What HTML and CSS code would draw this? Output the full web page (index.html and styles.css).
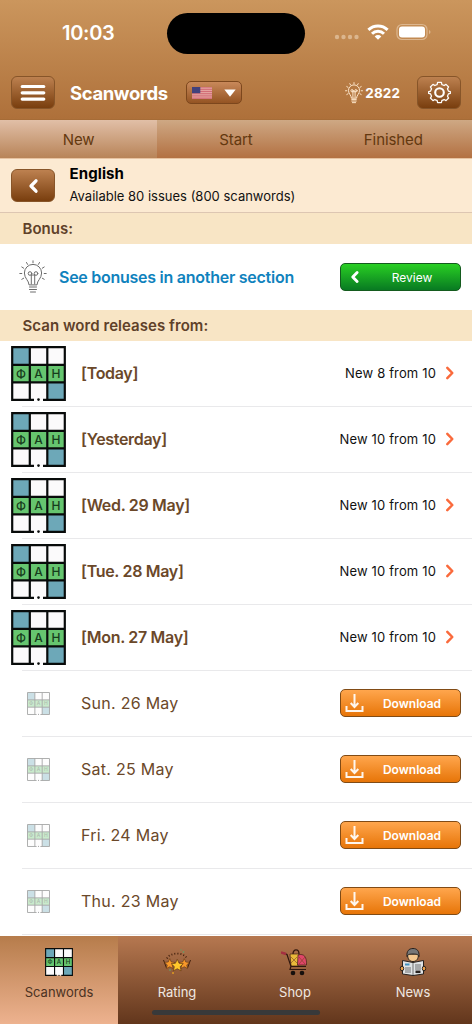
FILE: index.html
```html
<!DOCTYPE html>
<html lang="en">
<head>
<meta charset="utf-8">
<title>Scanwords</title>
<link rel="stylesheet" href="styles.css">
</head>
<body>
<svg class="defs" width="0" height="0">
  <symbol id="grid" viewBox="0 0 55 55">
    <rect x="1" y="1" width="53" height="53" fill="#fbfafb"/>
    <path d="M1 1h18v18H1zM36 36h18v18H36z" fill="#6da8b8"/>
    <path d="M1 19h53v17H1z" fill="#66c56f"/>
    <path d="M23 53.800H1.200V1.200h52.600v52.600H32M18.800 1v53M36.300 1v53M1 18.800h53M1 36.300h53" fill="none" stroke="#080b0a" stroke-width="2.200"/>
    <circle cx="27.500" cy="53.600" r="1.300" fill="#080b0a"/>
    <g class="grid-letters" text-anchor="middle"><text x="10" y="31.600">Ф</text><text x="27.500" y="31.600">А</text><text x="45" y="31.600">Н</text></g>
  </symbol>
  <symbol id="bulb" viewBox="0 0 28 34">
    <g fill="none" stroke="currentColor" stroke-linecap="round">
      <path d="M10 24.500c0-4-4.600-6-4.600-11.500a8.600 8.600 0 0 1 17.200 0c0 5.500-4.600 7.500-4.600 11.500zM10.500 27h7M10.500 29.500h7M11.500 32h5M12.300 24v-9M15.700 24v-9M12.300 15h3.400"/>
      <circle cx="11" cy="13.500" r="1.800"/><circle cx="17" cy="13.500" r="1.800"/>
      <path d="M14 .8v2M7.500 2.500l1.100 1.900M20.500 2.500l-1.100 1.900M2.800 7l1.900 1.200M25.200 7l-1.900 1.200M.8 13.500h2M25.200 13.500h2M2.800 19.300l1.900-1.100M25.200 19.300l-1.900-1.100"/>
    </g>
  </symbol>
  <symbol id="back" viewBox="0 0 12 16"><path d="M9 2.800L4 8l5 5.200" fill="none" stroke="#fff" stroke-width="3.300" stroke-linecap="round" stroke-linejoin="round"/></symbol>
  <symbol id="next" viewBox="0 0 10 16"><path d="M2.300 2.800L7.300 8l-5 5.200" fill="none" stroke="#fa6a3c" stroke-width="2.500" stroke-linecap="round" stroke-linejoin="round"/></symbol>
  <symbol id="download" viewBox="0 0 19 20"><path d="M1.500 13v5h16v-5M9.500 1v12M5.700 10l3.800 4 3.800-4" fill="none" stroke="#fff" stroke-opacity=".92" stroke-width="2"/></symbol>
  <symbol id="star" viewBox="0 0 12 12"><path d="M6 .7l1.600 3.500 3.800.4-2.800 2.600.8 3.800L6 9.100 2.600 11l.8-3.800L.6 4.600l3.800-.4z" stroke="#5f3614" stroke-width=".6"/></symbol>
</svg>
<div class="screen">
  <header class="header">
    <div class="status">
      <span class="clock">10:03</span>
      <span class="island"></span>
      <span class="status-icons">
        <svg width="26" height="6" viewBox="0 0 26 6" class="dots"><g fill="#dbb68e"><circle cx="3" cy="3" r="2.200"/><circle cx="9.500" cy="3" r="2.200"/><circle cx="16" cy="3" r="2.200"/><circle cx="22.500" cy="3" r="2.200"/></g></svg>
        <svg width="22" height="16" viewBox="0 0 22 16"><g fill="none" stroke="#fff" stroke-width="3"><path d="M1.400 5.900a13.700 13.700 0 0 1 19.200 0"/><path d="M5 9.700a8.600 8.600 0 0 1 12 0"/></g><path d="M7.700 12.400a4.700 4.700 0 0 1 6.600 0L11 15.700z" fill="#fff"/></svg>
        <svg width="36" height="18" viewBox="0 0 36 18"><rect x="1" y="1.500" width="30" height="15" rx="5" fill="none" stroke="#dcb68f" stroke-width="1.200"/><rect x="3" y="3.500" width="26" height="11" rx="3" fill="#fff"/><path d="M33 7c2 .7 2 3.300 0 4z" fill="#dcb68f"/></svg>
      </span>
    </div>
    <div class="toolbar">
      <button class="brown-btn"><svg width="26" height="18" viewBox="0 0 26 18"><path d="M2.200 2.500h21.600M2.200 8.800h21.600M2.200 15.100h21.600" stroke="#fff" stroke-width="3.200" stroke-linecap="round"/></svg></button>
      <h1 class="title">Scanwords</h1>
      <button class="lang">
        <svg width="20" height="12" viewBox="0 0 20 12"><rect width="20" height="12" fill="#e7a9a5"/><path d="M0 .8h20M0 2.600h20M0 4.500h20M0 6.400h20M0 8.200h20M0 10h20M0 11.600h20" stroke="#cf6670" stroke-width=".9"/><rect width="8.300" height="6.200" fill="#42417c"/></svg>
        <svg width="12" height="8" viewBox="0 0 12 8"><path d="M.3.500h11.400L6 7.800z" fill="#fff"/></svg>
      </button>
      <span class="hints"><svg class="hint-bulb" width="18" height="22"><use href="#bulb"/></svg><b>2822</b></span>
      <button class="brown-btn"><svg width="23" height="23" viewBox="0 0 24 24" fill="none" stroke="#fff"><path stroke-width="1.300" stroke-linejoin="round" d="M10 1.500h4l.5 2.200q1.300.3 2.300 1l2-1.200 2.700 2.700-1.200 2q.7 1 1 2.300l2 .5v2l-2 .5q-.3 1.300-1 2.300l1.200 2-2.700 2.700-2-1.200q-1 .7-2.300 1l-.5 2.200h-4l-.5-2.200q-1.300-.3-2.300-1l-2 1.200-2.700-2.700 1.200-2q-.7-1-1-2.300L.7 13v-2l2-.5q.3-1.300 1-2.300l-1.200-2 2.700-2.700 2 1.200q1-.7 2.300-1z"/><circle cx="12" cy="12" r="4.500" stroke-width="2.200"/></svg></button>
    </div>
  </header>
  <nav class="tabs"><a class="tab tab-on">New</a><a class="tab">Start</a><a class="tab">Finished</a></nav>
  <section class="info">
    <button class="brown-btn"><svg width="12" height="16"><use href="#back"/></svg></button>
    <div class="info-text"><h2>English</h2><p>Available 80 issues (800 scanwords)</p></div>
  </section>
  <h3 class="heading">Bonus:</h3>
  <section class="bonus">
    <svg class="bonus-bulb" width="28" height="34"><use href="#bulb"/></svg>
    <a class="bonus-link">See bonuses in another section</a>
    <button class="action review"><svg width="11" height="14" viewBox="0 0 12 16"><use href="#back"/></svg><span>Review</span></button>
  </section>
  <h3 class="heading">Scan word releases from:</h3>
  <main class="list">
    <div class="row"><svg class="thumb"><use href="#grid"/></svg><b class="date">[Today]</b><span class="count">New 8 from 10</span><svg class="next"><use href="#next"/></svg></div>
    <div class="row"><svg class="thumb"><use href="#grid"/></svg><b class="date">[Yesterday]</b><span class="count">New 10 from 10</span><svg class="next"><use href="#next"/></svg></div>
    <div class="row"><svg class="thumb"><use href="#grid"/></svg><b class="date">[Wed. 29 May]</b><span class="count">New 10 from 10</span><svg class="next"><use href="#next"/></svg></div>
    <div class="row"><svg class="thumb"><use href="#grid"/></svg><b class="date">[Tue. 28 May]</b><span class="count">New 10 from 10</span><svg class="next"><use href="#next"/></svg></div>
    <div class="row"><svg class="thumb"><use href="#grid"/></svg><b class="date">[Mon. 27 May]</b><span class="count">New 10 from 10</span><svg class="next"><use href="#next"/></svg></div>
    <div class="row"><svg class="thumb faded"><use href="#grid"/></svg><span class="date">Sun. 26 May</span><button class="action download"><svg width="19" height="20"><use href="#download"/></svg><span>Download</span></button></div>
    <div class="row"><svg class="thumb faded"><use href="#grid"/></svg><span class="date">Sat. 25 May</span><button class="action download"><svg width="19" height="20"><use href="#download"/></svg><span>Download</span></button></div>
    <div class="row"><svg class="thumb faded"><use href="#grid"/></svg><span class="date">Fri. 24 May</span><button class="action download"><svg width="19" height="20"><use href="#download"/></svg><span>Download</span></button></div>
    <div class="row"><svg class="thumb faded"><use href="#grid"/></svg><span class="date">Thu. 23 May</span><button class="action download"><svg width="19" height="20"><use href="#download"/></svg><span>Download</span></button></div>
  </main>
  <footer class="footer">
    <a class="foot foot-on"><svg width="28" height="28"><use href="#grid"/></svg><span>Scanwords</span></a>
    <a class="foot"><svg width="28" height="28" viewBox="0 0 28 28">
      <path d="M4 10.500c3-6.500 17-6.500 20 0" fill="none" stroke="#42200d" stroke-width="1.800" stroke-dasharray="1 2"/>
      <path d="M.5 12l3 8M27.500 12l-3 8" stroke="#42200d" stroke-width="1"/>
      <use href="#star" x="1" y="10" width="11.500" height="11.500" fill="#f7982a"/><use href="#star" x="15.500" y="10" width="11.500" height="11.500" fill="#f7982a"/><use href="#star" x="7.500" y="10.500" width="13.500" height="13.500" fill="#ffc82c"/>
      <g fill="#6f9665"><circle cx="18" cy="2" r=".8"/><circle cx="20.500" cy="4" r=".9"/><circle cx="7" cy="22" r=".9"/></g><circle cx="10" cy="25" r="1" fill="#df9b22"/></svg><span>Rating</span></a>
    <a class="foot"><svg width="28" height="28" viewBox="0 0 28 28">
      <path d="M12 6c0-5.500 6-5.500 6 0" fill="none" stroke="#32170d" stroke-width="1.300"/>
      <path d="M9 6h9l-1 12h-7z" fill="#e9b93a" stroke="#422014" stroke-width=".7"/><path d="M17 7c6-2 9 2 8.500 10H16.500z" fill="#df4668" stroke="#422014" stroke-width=".7"/>
      <path d="M10 9l6 6M16 9l-6 6M18 9l6 7M24 9l-6 7" stroke="#7b4224" stroke-width=".6"/>
      <path d="M1 4.500l5 2 4 12h15M10 18l-1 3.500h16" fill="none" stroke="#2f170f" stroke-width="1.200"/><path d="M0 4.500l5 1.500" stroke="#a52f41" stroke-width="2.500"/><circle cx="12" cy="25" r="2.300" fill="#16100d"/><circle cx="21" cy="25" r="2.300" fill="#16100d"/></svg><span>Shop</span></a>
    <a class="foot"><svg width="28" height="28" viewBox="0 0 28 28" stroke="#27211e" stroke-width="1">
      <path d="M8.500 6c0 5 2 7.500 5.500 7.500s5.500-2.500 5.500-7.500z" fill="#f4c88f"/><path d="M8 8.500C7.400 3 10 .5 14 .5s6.500 2.500 6 8c-1-2-2-2.500-6-2.500s-5 .5-6 2.500z" fill="#777878"/>
      <path d="M3.500 12.500L14 14.500l10.500-2V26L14 27.500 3.500 26z" fill="#dfe3e5"/><path d="M14 14.500v13M6 20h6M6 22h6M6 24h6M16 17h6M16 19h6M16 21h6" stroke-width=".6"/><path d="M6 16.500h4.500" stroke="#4290bd" stroke-width="2"/><path d="M16.500 23.800h5" stroke-width="2.500"/><ellipse cx="3" cy="20.500" rx="1.700" ry="2.300" fill="#efa34a"/><ellipse cx="25" cy="20.500" rx="1.700" ry="2.300" fill="#efa34a"/></svg><span>News</span></a>
    <span class="home"></span>
  </footer>
</div>
</body>
</html>
```
FILE: styles.css
```css
* { box-sizing: border-box; }
body { margin: 0; font-family: Inter, "Liberation Sans", sans-serif; background: #fff; color: #111; }
h1, h2, h3, p { margin: 0; }
button { margin: 0; padding: 0; font: inherit; color: #fff; }
svg { display: block; flex: none; }
.defs { display: none; }
.screen { width: 472px; height: 1024px; overflow: hidden; display: flex; flex-direction: column; }
.header { height: 120px; flex: none; background: linear-gradient(#cb965d, #ae703a); color: #fff; border-bottom: 1px solid #a66c37; }
.status { height: 66px; display: grid; grid-template-columns: 167px 138px 1fr; align-items: center; }
.clock { padding-left: 62px; font-size: 20px; font-weight: 600; letter-spacing: -.3px; }
.island { height: 41px; border-radius: 21px; background: #000; }
.status-icons { display: flex; align-items: center; padding-left: 29px; margin-top: -3px; }
.dots { margin: 10px 7px 0 0; }
.status-icons svg:last-child { margin-left: 7px; }
.toolbar { height: 53px; display: flex; align-items: center; padding: 0 11px; }
.brown-btn { width: 44px; height: 33px; flex: none; border: 1px solid #875529; border-radius: 6px; background: linear-gradient(#bd8150, #793e0e); display: flex; align-items: center; justify-content: center; }
.title { width: 117px; padding-left: 15px; font-size: 18.500px; font-weight: 700; letter-spacing: -.4px; }
.lang { width: 56px; height: 23px; margin-left: 14px; border: 1.500px solid #7c471d; border-radius: 5px; background: linear-gradient(#c9895a, #945423); display: flex; align-items: center; justify-content: space-between; padding: 0 5px; }
.hints { display: flex; align-items: center; gap: 2px; margin-left: auto; margin-right: 17px; font-size: 13.500px; letter-spacing: .1px; }
.hint-bulb { stroke-width: 1.500; color: #ffe9cf; }
.tabs { height: 39px; flex: none; display: grid; grid-template-columns: repeat(3, 1fr); border-bottom: 1px solid #e7c3a1; }
.tab { display: flex; align-items: center; justify-content: center; font-size: 15px; letter-spacing: -.1px; color: #63380f; background: linear-gradient(#cea884, #b37142); }
.tab-on { background: linear-gradient(#e1bfa7, #b88458); }
.info { height: 54px; flex: none; display: flex; align-items: center; padding-left: 11px; gap: 15px; background: #fcead2; border-bottom: 1px solid #ddc6b2; }
.info-text { padding-bottom: 1px; margin-left: -.5px; }
.info h2 { font-size: 15px; line-height: 22px; font-weight: 700; letter-spacing: .1px; color: #000; }
.info p { font-size: 13px; line-height: 23px; }
.heading { height: 31px; flex: none; padding-left: 22.500px; font-size: 15px; line-height: 31px; font-weight: 600; letter-spacing: .05px; color: #5f4129; background: #f8e5c5; }
.bonus { height: 66px; flex: none; display: flex; align-items: center; padding: 0 11px 0 19px; }
.bonus-bulb { color: #6c6c6c; }
.bonus-link { margin-left: 12px; font-size: 16px; font-weight: 600; letter-spacing: -.26px; color: #0f82bd; }
.action { width: 121px; height: 28px; margin-left: auto; border: 1.500px solid #814b15; border-radius: 5px; display: flex; align-items: center; }
.action span { flex: 1; text-align: center; }
.review { border-color: #145b1e; background: linear-gradient(#29cf23, #087a22); padding-left: 8px; font-size: 12px; }
.review span { padding-left: 4px; }
.download { background: linear-gradient(#ffa64d, #e77508); padding-left: 4px; font-size: 12px; font-weight: 600; }
.list { flex: none; }
.row { height: 66px; display: flex; align-items: center; padding: 0 17px 2px 11px; background: linear-gradient(#e9e9eb, #e9e9eb) right bottom / calc(100% - 22px) 1px no-repeat; }
.row:has(.download) { padding-right: 11px; }
.thumb { width: 55px; height: 55px; }
.grid-letters { font: 500 12px Inter, sans-serif; fill: #163c1c; }
.faded { width: 23px; height: 23px; margin: 0 16px; opacity: .35; }
.date { margin-left: 15px; font-size: 16px; letter-spacing: .27px; color: #6b4829; font-weight: 400; }
b.date { font-weight: 600; letter-spacing: -.32px; }
.count { margin-left: auto; font-size: 13px; letter-spacing: .15px; }
.next { width: 10px; height: 16px; margin-left: 9px; }
.footer { position: relative; height: 88px; flex: none; margin-top: 1px; display: grid; grid-template-columns: repeat(4, 1fr); background: linear-gradient(#b67850, #62361c); }
.foot { display: flex; flex-direction: column; align-items: center; padding-top: 12px; gap: 7px; font-size: 13px; line-height: 18px; color: #f0e8e1; }
.foot-on { color: #4b3222; background: linear-gradient(#b67c4b, #edb28f); }
.home { position: absolute; left: 152px; bottom: 9px; width: 168px; height: 5px; border-radius: 3px; background: #38393a; }
```
